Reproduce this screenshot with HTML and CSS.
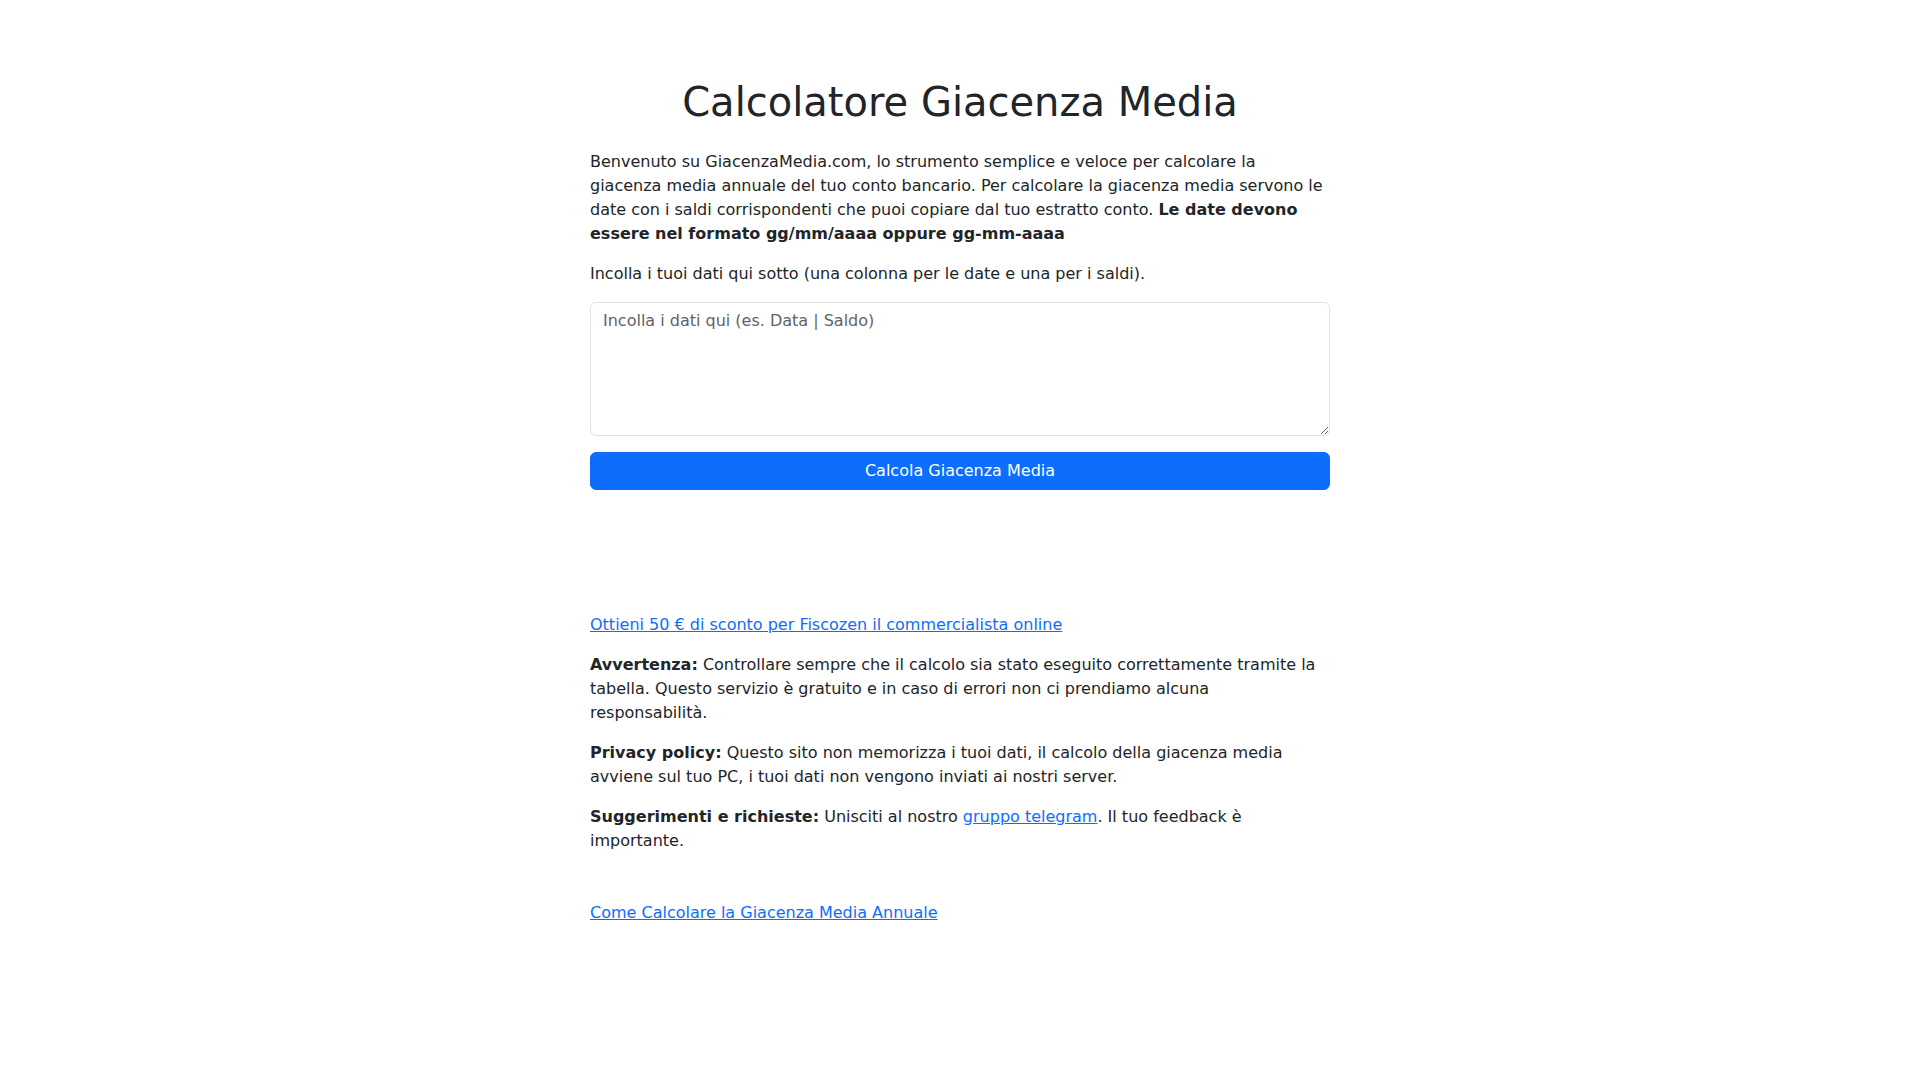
FILE: index.html
```html
<!DOCTYPE html>
<html lang="it">
  <head>
    <meta charset="UTF-8" />
    <title>Calcolatore Giacenza Media</title>
    <link rel="stylesheet" href="styles.css">
  </head>
  <body>
    <div class="container">
      <h1 class="title">Calcolatore Giacenza Media</h1>
      <p>
        Benvenuto su GiacenzaMedia.com, lo strumento semplice e veloce per calcolare la giacenza media annuale del tuo conto bancario. Per calcolare la giacenza media servono le date con i saldi corrispondenti che puoi copiare dal tuo estratto conto. <strong>Le date devono essere nel formato gg/mm/aaaa oppure gg-mm-aaaa</strong>
      </p>
      <p>Incolla i tuoi dati qui sotto (una colonna per le date e una per i saldi).</p>

      <textarea class="data-input" rows="5" placeholder="Incolla i dati qui (es. Data | Saldo)"></textarea>
      <button class="btn-calc" type="button">Calcola Giacenza Media</button>

      <!-- risultato del calcolo -->
      <div class="result"></div>

      <p><a href="#">Ottieni 50 € di sconto per Fiscozen il commercialista online</a></p>
      <p><strong>Avvertenza:</strong> Controllare sempre che il calcolo sia stato eseguito correttamente tramite la tabella. Questo servizio è gratuito e in caso di errori non ci prendiamo alcuna responsabilità.</p>
      <p><strong>Privacy policy:</strong> Questo sito non memorizza i tuoi dati, il calcolo della giacenza media avviene sul tuo PC, i tuoi dati non vengono inviati ai nostri server.</p>
      <p><strong>Suggerimenti e richieste:</strong> Unisciti al nostro <a href="#">gruppo telegram</a>. Il tuo feedback è importante.</p>

      <p class="guide"><a href="#">Come Calcolare la Giacenza Media Annuale</a></p>
    </div>
  </body>
</html>
```

FILE: styles.css
```css
* {
  box-sizing: border-box;
}
body {
  margin: 0;
  font-family: "DejaVu Sans", sans-serif;
  font-size: 16px;
  line-height: 1.5;
  color: #212529;
  background: #fff;
}
.container {
  max-width: 764px;
  margin: 0 auto;
  padding: 78px 12px 48px;
}
.title {
  margin: 0 0 24px;
  font-size: 40px;
  font-weight: 400;
  line-height: 1.2;
  text-align: center;
}
p {
  margin: 0 0 16px;
}
strong {
  font-weight: 700;
}
a {
  color: #0d6efd;
  text-decoration: underline;
}
.data-input {
  display: block;
  width: 100%;
  height: 134px;
  margin: 0;
  padding: 6px 12px;
  font: inherit;
  color: #212529;
  border: 1px solid #dee2e6;
  border-radius: 6px;
  resize: vertical;
}
.data-input::placeholder {
  color: #5f6368;
}
.btn-calc {
  display: block;
  width: 100%;
  height: 38px;
  margin-top: 16px;
  padding: 6px 12px;
  font: inherit;
  color: #fff;
  background: #0d6efd;
  border: 1px solid #0d6efd;
  border-radius: 6px;
}
.result {
  height: 123px;
}
.guide {
  margin-top: 48px;
}
```
